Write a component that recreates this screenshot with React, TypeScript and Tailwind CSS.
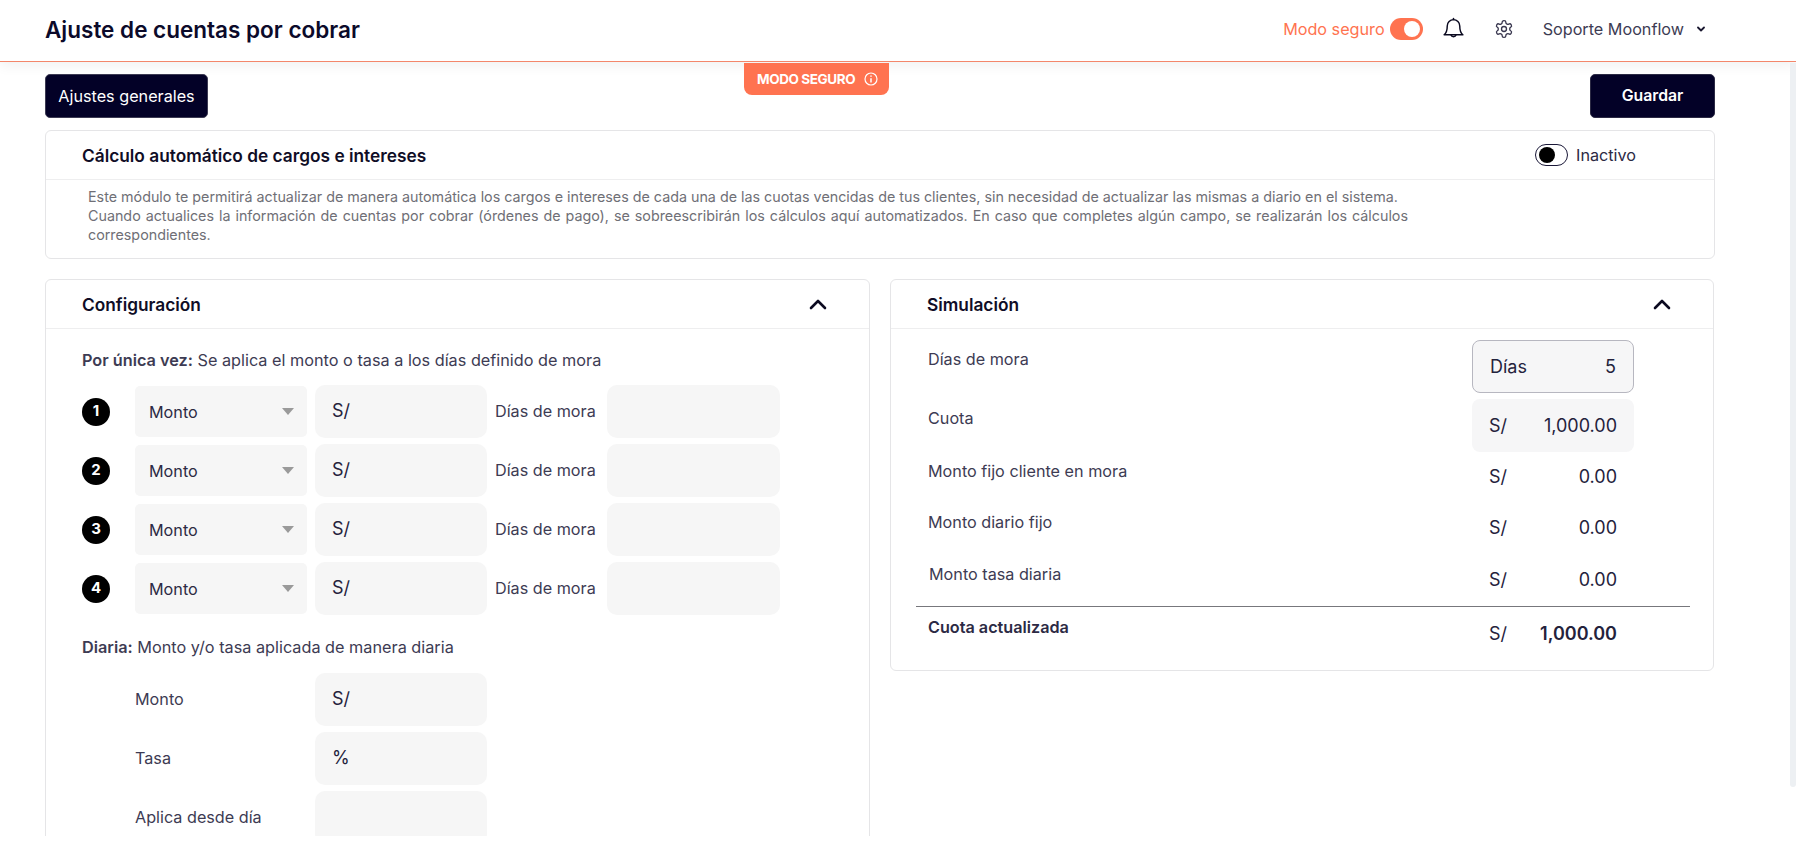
import React from "react";

function Toggle() {
  return (
    <span className="flex h-[22px] w-[33px] items-center justify-end rounded-full bg-[#ff7350] pr-[3px]">
      <span className="h-[16px] w-[16px] rounded-full bg-white" />
    </span>
  );
}

function Card({ title, children }: { title: string; children: React.ReactNode }) {
  return (
    <section className="rounded-md border border-[#e5e5e7] bg-white">
      <div className="flex h-[49px] items-center justify-between border-b border-[#eeeeef] pl-[36px] pr-[42px]">
        <h2 className="pt-[2px] text-[17.300px] font-semibold text-[#0f0d26]">{title}</h2>
        <svg width="18" height="11" viewBox="0 0 18 11" fill="none" stroke="#0b0a20" strokeWidth="2.6" strokeLinecap="round" strokeLinejoin="round">
          <path d="M2 9 L9 2 L16 9" />
        </svg>
      </div>
      {children}
    </section>
  );
}

function Box({ prefix, wide }: { prefix?: string; wide?: boolean }) {
  return (
    <div className={`flex h-[53px] items-center rounded-[10px] bg-[#f6f6f6] pb-[2px] pl-[17px] text-[18px] text-[#24223c] ${wide ? "w-[173px]" : "w-[172px]"}`}>
      {prefix}
    </div>
  );
}

function OnceRow({ n }: { n: number }) {
  return (
    <div className="flex h-[53px] items-center">
      <span className="flex h-[28px] w-[28px] items-center justify-center rounded-full bg-black text-[15px] font-bold text-white">{n}</span>
      <div className="ml-[25px] flex h-[51px] w-[172px] items-center justify-between rounded-[5px] bg-[#f6f6f6] pl-[14px] pr-[13px] text-[16.200px] text-[#2c2a44]">
        <span className="pt-[2px]">Monto</span>
        <svg width="12" height="7" viewBox="0 0 12 7"><path d="M0 0 H12 L6 7 Z" fill="#9a9a9a" /></svg>
      </div>
      <div className="ml-[8px]"><Box prefix="S/" /></div>
      <span className="ml-[8px] w-[112px] text-[16.200px] text-[#3d3b53]">Días de mora</span>
      <Box wide />
    </div>
  );
}

function DailyRow({ label, prefix }: { label: string; prefix?: string }) {
  return (
    <div className="flex h-[53px] items-center">
      <span className="w-[180px] text-[16.200px] text-[#3d3b53]">{label}</span>
      <Box prefix={prefix} />
    </div>
  );
}

function SimRow({ label, unit, value, rowClass, labelClass, boxed, bordered }: { label: string; unit: string; value: string; rowClass: string; labelClass: string; boxed?: boolean; bordered?: boolean }) {
  return (
    <div className={`flex items-start justify-between ${rowClass}`}>
      <span className={`text-[16.200px] leading-[22px] text-[#3d3b53] ${labelClass}`}>{label}</span>
      <div className={`mr-[79px] flex h-[53px] w-[162px] items-center justify-between rounded-[8px] px-[17px] text-[18px] text-[#24223c] ${boxed ? "bg-[#f6f6f7]" : ""} ${bordered ? "border border-[#b7b7c0] bg-[#f6f6f7]" : ""}`}>
        <span>{unit}</span>
        <span>{value}</span>
      </div>
    </div>
  );
}

export default function App() {
  return (
    <div className="relative h-[848px] w-[1796px] overflow-hidden bg-white font-['Inter',sans-serif]">
      <header className="flex h-[62px] items-center justify-between border-b border-[#f3866a] bg-white pb-[3px] pl-[45px] pr-[91px] shadow-[0_4px_12px_rgba(0,0,0,0.06)]">
        <h1 className="pt-[2px] text-[22.500px] font-semibold text-[#0b0a2a]">Ajuste de cuentas por cobrar</h1>
        <div className="flex items-center">
          <span className="text-[16.200px] text-[#ff7350]">Modo seguro</span>
          <span className="ml-[5px]"><Toggle /></span>
          <svg className="ml-[18px]" width="25" height="26" viewBox="0 0 24 24" fill="none" stroke="#0b0a20" strokeWidth="1.400" strokeLinecap="round" strokeLinejoin="round">
            <path d="M6 9a6 6 0 0 1 12 0c0 5 1.200 7 3 8.500H3C4.800 16 6 14 6 9Z" />
            <path d="M9.500 17.500a2.600 2.600 0 0 0 5 0" />
            <path d="M12 3V2" />
          </svg>
          <svg className="ml-[28px]" width="20" height="20" viewBox="0 0 24 24" fill="none" stroke="#3a3850" strokeWidth="1.600" strokeLinecap="round" strokeLinejoin="round">
            <path d="M12.220 2h-.44a2 2 0 0 0-2 2v.18a2 2 0 0 1-1 1.730l-.43.250a2 2 0 0 1-2 0l-.15-.08a2 2 0 0 0-2.730.730l-.22.380a2 2 0 0 0 .730 2.730l.15.100a2 2 0 0 1 1 1.720v.510a2 2 0 0 1-1 1.740l-.15.090a2 2 0 0 0-.730 2.730l.22.380a2 2 0 0 0 2.730.730l.15-.08a2 2 0 0 1 2 0l.43.250a2 2 0 0 1 1 1.730V20a2 2 0 0 0 2 2h.44a2 2 0 0 0 2-2v-.18a2 2 0 0 1 1-1.730l.43-.250a2 2 0 0 1 2 0l.15.08a2 2 0 0 0 2.730-.730l.22-.390a2 2 0 0 0-.730-2.730l-.15-.08a2 2 0 0 1-1-1.740v-.5a2 2 0 0 1 1-1.740l.15-.09a2 2 0 0 0 .730-2.730l-.22-.380a2 2 0 0 0-2.730-.730l-.15.08a2 2 0 0 1-2 0l-.43-.250a2 2 0 0 1-1-1.730V4a2 2 0 0 0-2-2z" />
            <circle cx="12" cy="12" r="3" />
          </svg>
          <span className="ml-[29px] text-[16.200px] text-[#3d3b53]">Soporte Moonflow</span>
          <svg className="ml-[13px]" width="8" height="6" viewBox="0 0 8 6" fill="none" stroke="#1a1830" strokeWidth="1.800" strokeLinecap="round" strokeLinejoin="round">
            <path d="M1 1.500 L4 4.500 L7 1.500" />
          </svg>
        </div>
      </header>

      <div className="absolute left-[744px] top-[63px] flex h-[32px] w-[145px] items-center rounded-b-[8px] bg-[#ff7350] pl-[13px] text-[13.500px] font-bold text-white">
        <span className="tracking-[-0.4px]">MODO SEGURO</span>
        <svg className="ml-[9px]" width="14" height="14" viewBox="0 0 14 14" fill="none" stroke="white" strokeWidth="1.200">
          <circle cx="7" cy="7" r="6" />
          <path d="M7 6.200V10.500M7 3.400V4.800" strokeWidth="1.500" />
        </svg>
      </div>

      <main className="h-[774px] overflow-hidden pl-[45px] pr-[81px]">
        <div className="mt-[12px] flex items-center justify-between">
          <button className="h-[44px] w-[163px] rounded-[5px] border border-[#3d3b53] bg-[#030127] text-[16.200px] text-white">Ajustes generales</button>
          <button className="h-[44px] w-[125px] rounded-[5px] border border-[#2c2a44] bg-[#030127] text-[15.800px] font-semibold text-white">Guardar</button>
        </div>

        <section className="mt-[12px] h-[129px] rounded-md border border-[#e5e5e7] bg-white">
          <div className="flex h-[49px] items-center border-b border-[#eeeeef] pl-[36px] pr-[78px]">
            <h2 className="flex-1 pt-[2px] text-[17.300px] font-semibold text-[#0f0d26]">Cálculo automático de cargos e intereses</h2>
            <span className="flex h-[22px] w-[33px] items-center rounded-full border border-[#1a1838] pl-[3px]">
              <span className="h-[16px] w-[16px] rounded-full bg-black" />
            </span>
            <span className="ml-[8px] text-[16.200px] text-[#2c2a44]">Inactivo</span>
          </div>
          <p className="ml-[42px] w-[1320px] pt-[7px] text-justify text-[14.300px] leading-[19px] text-[#6f6f76]">
            Este módulo te permitirá actualizar de manera automática los cargos e intereses de cada una de las cuotas vencidas de tus clientes, sin necesidad de actualizar las mismas a diario en el sistema.<br />Cuando actualices la información de cuentas por cobrar (órdenes de pago), se sobreescribirán los cálculos aquí automatizados. En caso que completes algún campo, se realizarán los cálculos correspondientes.
          </p>
        </section>

        <div className="mt-[20px] grid grid-cols-[825px_824px] items-start gap-x-[20px]">
          <Card title="Configuración">
            <div className="pl-[36px] pt-[20px]">
              <p className="text-[16.250px] leading-[22px] text-[#3d3b53]"><b className="font-semibold">Por única vez:</b> Se aplica el monto o tasa a los días definido de mora</p>
              <div className="mt-[14px] flex flex-col gap-[6px]">
                {[1, 2, 3, 4].map((n) => <OnceRow key={n} n={n} />)}
              </div>
              <p className="mt-[21px] text-[16.250px] leading-[22px] text-[#3d3b53]"><b className="font-semibold">Diaria:</b> Monto y/o tasa aplicada de manera diaria</p>
              <div className="ml-[53px] mt-[15px] flex flex-col gap-[6px]">
                <DailyRow label="Monto" prefix="S/" />
                <DailyRow label="Tasa" prefix="%" />
                <DailyRow label="Aplica desde día" />
              </div>
            </div>
          </Card>
          <Card title="Simulación">
            <div className="pb-[10px] pl-[37px] pt-[11px]">
              <SimRow label="Días de mora" unit="Días" value="5" bordered rowClass="" labelClass="mt-[8px]" />
              <SimRow label="Cuota" unit="S/" value="1,000.00" boxed rowClass="mt-[6px]" labelClass="mt-[8px]" />
              <SimRow label="Monto fijo cliente en mora" unit="S/" value="0.00" rowClass="mt-[-2px]" labelClass="mt-[10px]" />
              <SimRow label="Monto diario fijo" unit="S/" value="0.00" rowClass="mt-[-2px]" labelClass="mt-[10px]" />
              <SimRow label="Monto tasa diaria" unit="S/" value="0.00" rowClass="mt-[-1px]" labelClass="ml-[1px] mt-[10px]" />
              <div className="-ml-[12px] mr-[23px] border-t border-[#77777c]" />
              <div className="flex items-start justify-between">
                <span className="mt-[9px] text-[16.200px] font-semibold leading-[22px] text-[#2c2a44]">Cuota actualizada</span>
                <div className="mr-[79px] flex h-[53px] w-[162px] items-center justify-between px-[17px] text-[18px] text-[#24223c]">
                  <span>S/</span>
                  <span className="font-semibold">1,000.00</span>
                </div>
              </div>
            </div>
          </Card>
        </div>
      </main>
      <div className="absolute right-0 top-[63px] h-[724px] w-[6px] rounded-b-[4px] bg-[#edf0f3]" />
    </div>
  );
}
